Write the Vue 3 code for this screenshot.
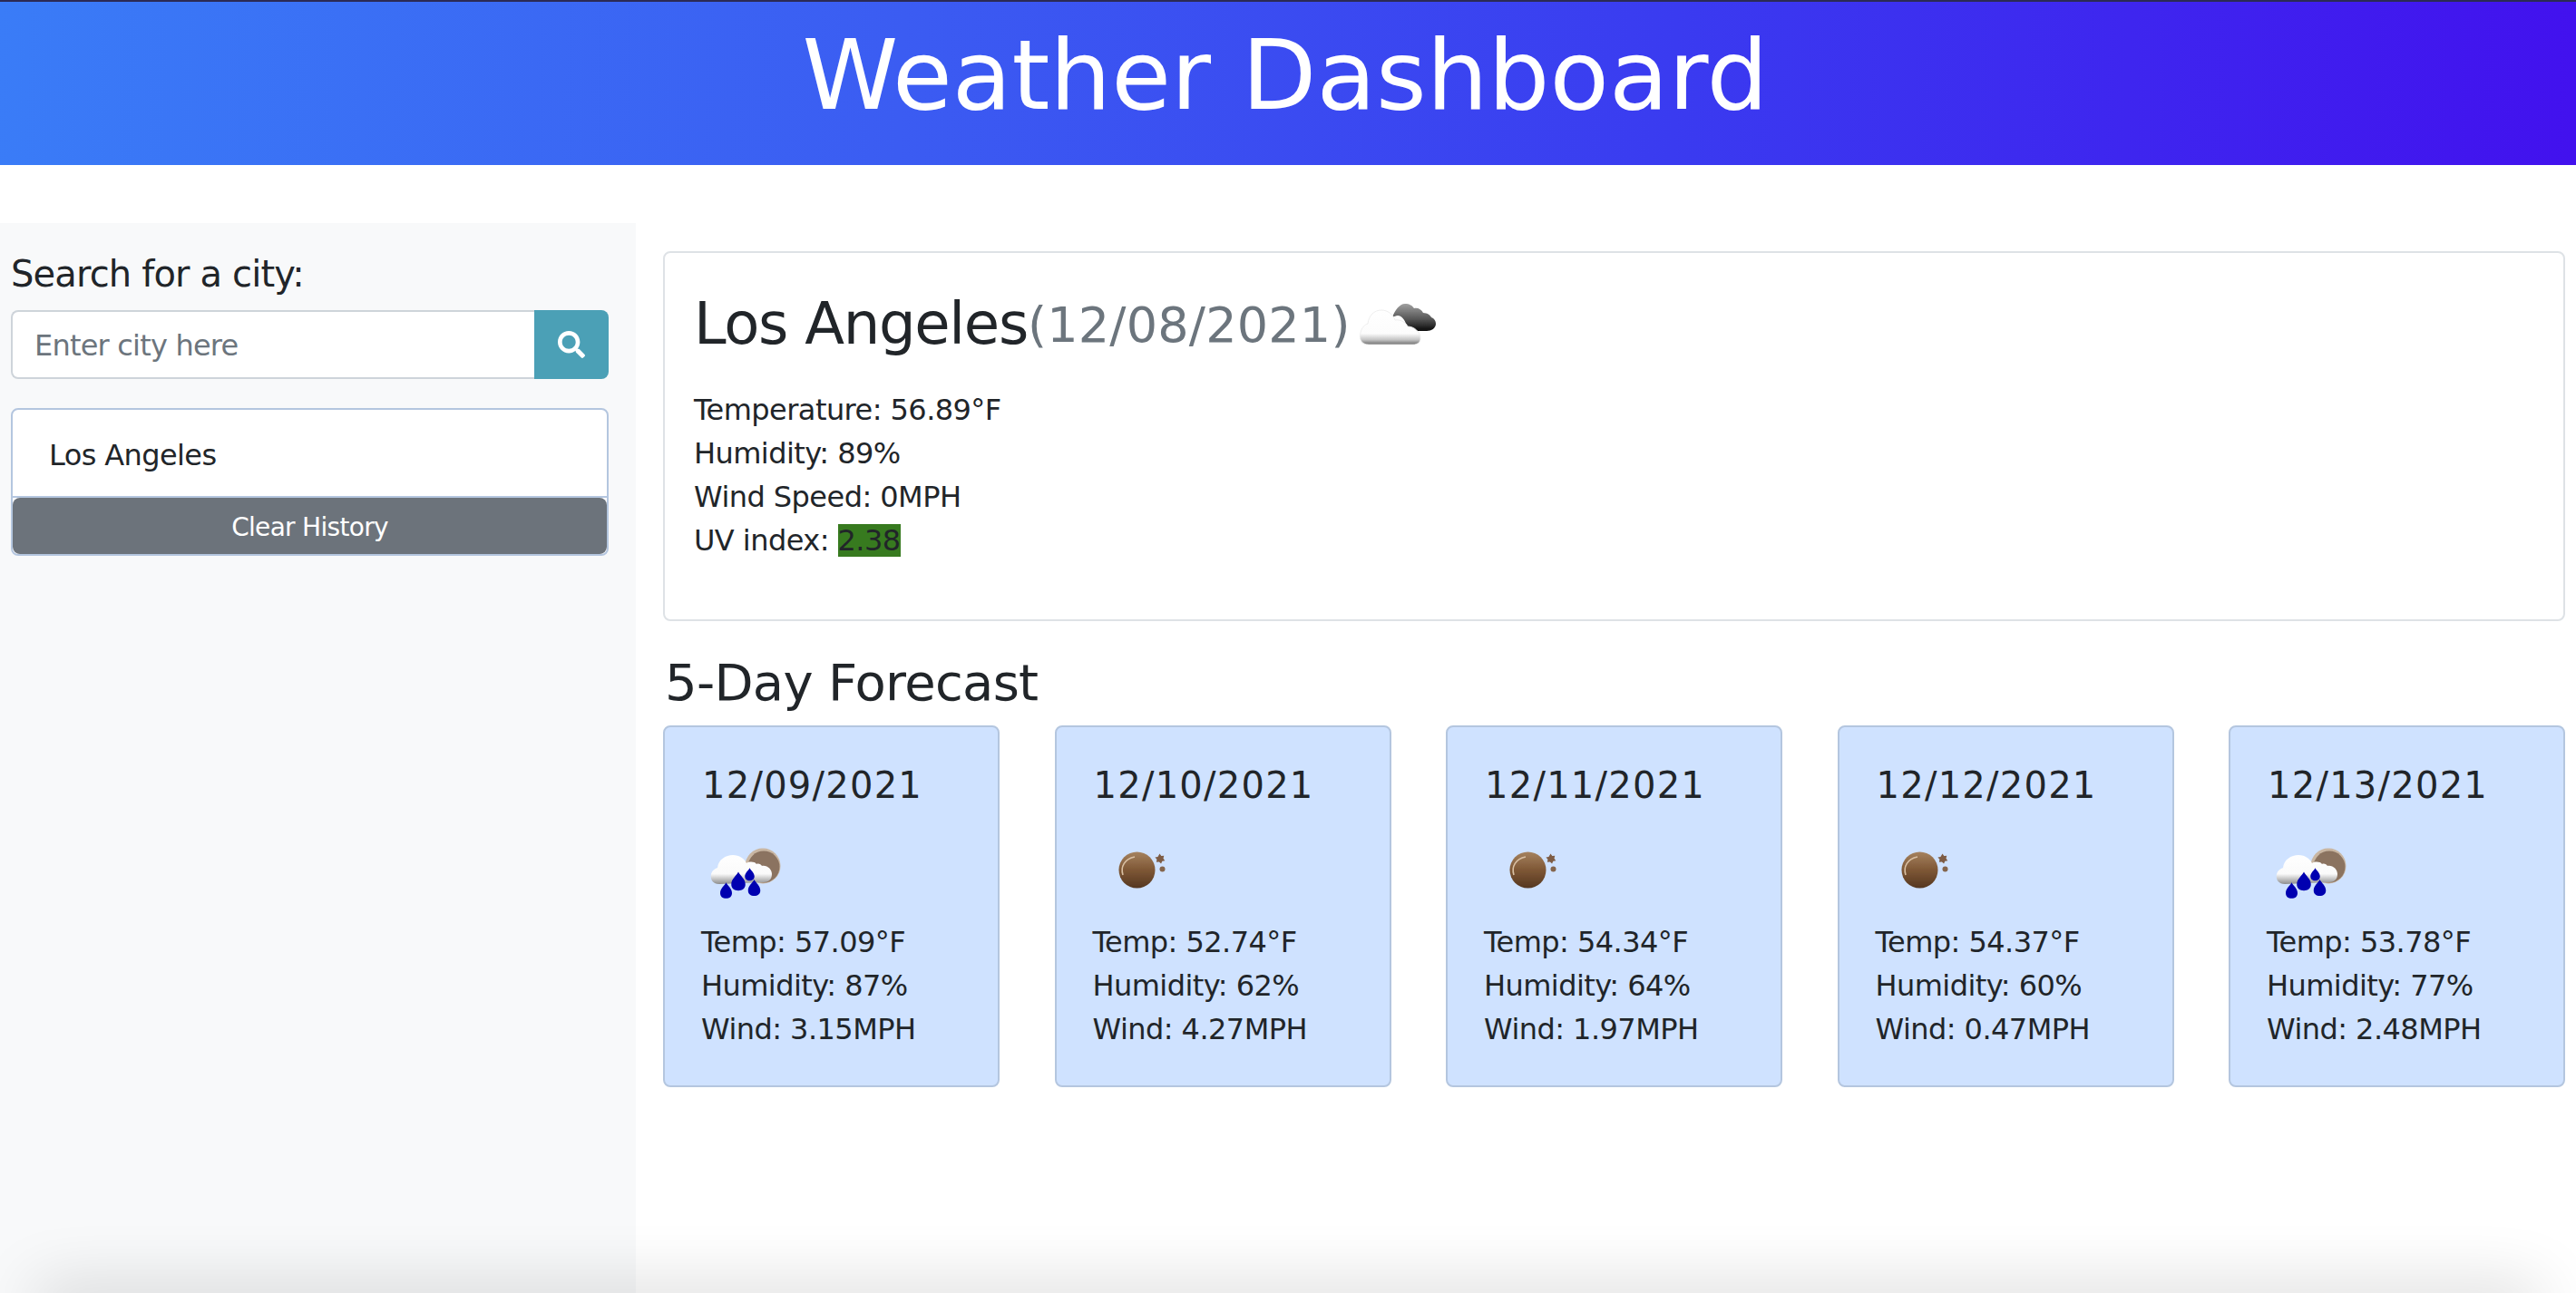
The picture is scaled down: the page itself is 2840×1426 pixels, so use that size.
<script setup>
const current = {
  city: 'Los Angeles',
  date: '(12/08/2021)',
  temp: '56.89',
  humidity: '89',
  wind: '0',
  uv: '2.38'
}

const forecast = [
  { date: '12/09/2021', icon: 'rain', temp: '57.09', humidity: '87', wind: '3.15' },
  { date: '12/10/2021', icon: 'moon', temp: '52.74', humidity: '62', wind: '4.27' },
  { date: '12/11/2021', icon: 'moon', temp: '54.34', humidity: '64', wind: '1.97' },
  { date: '12/12/2021', icon: 'moon', temp: '54.37', humidity: '60', wind: '0.47' },
  { date: '12/13/2021', icon: 'rain', temp: '53.78', humidity: '77', wind: '2.48' }
]

const drops = [
  { x: 31.5, y: 63, s: 1.3 },
  { x: 45, y: 53, s: 1.55 },
  { x: 57.5, y: 45, s: 1.05 },
  { x: 62.5, y: 60, s: 1.35 }
]
</script>

<template>
  <div class="page">
    <header class="top-bar">
      <h1>Weather Dashboard</h1>
    </header>

    <div class="content">
      <aside class="sidebar">
        <label class="search-label" for="city">Search for a city:</label>
        <div class="search-row">
          <input id="city" class="search-input" type="text" placeholder="Enter city here" />
          <button class="search-btn" aria-label="Search">
            <svg viewBox="0 0 512 512" width="30" height="30">
              <path fill="#fff" d="M505 442.7L405.3 343c-4.5-4.5-10.6-7-17-7H372c27.6-35.3 44-79.7 44-128C416 93.1 322.9 0 208 0S0 93.1 0 208s93.1 208 208 208c48.3 0 92.7-16.4 128-44v16.3c0 6.4 2.5 12.5 7 17l99.7 99.7c9.4 9.4 24.6 9.4 33.9 0l28.3-28.3c9.4-9.4 9.4-24.6.1-34zM208 336c-70.7 0-128-57.2-128-128 0-70.7 57.2-128 128-128 70.7 0 128 57.2 128 128 0 70.7-57.2 128-128 128z" />
            </svg>
          </button>
        </div>
        <div class="history">
          <div class="history-item">Los Angeles</div>
          <button class="clear-btn">Clear History</button>
        </div>
      </aside>

      <main class="main">
        <section class="today">
          <h2 class="city">
            {{ current.city }}<span class="today-date">{{ current.date }}</span>
            <svg class="today-icon" viewBox="0 0 100 60" width="100" height="60">
              <defs>
                <linearGradient id="whiteCloud" x1="0" y1="0" x2="0" y2="1">
                  <stop offset="0" stop-color="#fff" />
                  <stop offset="0.68" stop-color="#fcfcfc" />
                  <stop offset="0.86" stop-color="#c4c4c4" />
                  <stop offset="1" stop-color="#6f6f6f" />
                </linearGradient>
                <linearGradient id="darkCloud" x1="0" y1="0" x2="0" y2="1">
                  <stop offset="0" stop-color="#a0a0a0" />
                  <stop offset="0.55" stop-color="#585858" />
                  <stop offset="1" stop-color="#0a0a0a" />
                </linearGradient>
                <filter id="soft"><feGaussianBlur stdDeviation="0.6" /></filter>
              </defs>
              <g filter="url(#soft)">
                <path fill="url(#darkCloud)" d="M38 22C41 14 46 7 52 7c5 0 8 2 10 5 4-1 8 1 10 5 5 0 8 3 9 5 3 1 5 4 5 7 0 5-5 8-10 8H66c-6 0-11-3-13-8-1-4-5-9-9-9-2 0-4 1-6 2z" />
                <path fill="url(#whiteCloud)" stroke="#eaeaea" stroke-width="0.8" d="M12 52C4 52 1 46 3 39c1-6 5-9 8-10 1-9 7-15 15-15 7 0 13 5 15 11 5-1 12 2 14 7 7 0 14 6 14 13 0 5-4 7-8 7z" />
              </g>
            </svg>
          </h2>
          <p>Temperature: {{ current.temp }}°F</p>
          <p>Humidity: {{ current.humidity }}%</p>
          <p>Wind Speed: {{ current.wind }}MPH</p>
          <p>UV index: <span class="uv">{{ current.uv }}</span></p>
        </section>

        <h3 class="forecast-title">5-Day Forecast</h3>
        <div class="forecast">
          <article v-for="day in forecast" :key="day.date" class="day-card">
            <h5 class="day-date">{{ day.date }}</h5>
            <svg class="day-icon" viewBox="0 0 100 80" width="100" height="80">
              <defs>
                <linearGradient id="rainCloud" x1="0" y1="0" x2="0" y2="1">
                  <stop offset="0" stop-color="#fff" />
                  <stop offset="0.65" stop-color="#fafafa" />
                  <stop offset="1" stop-color="#8d8d8d" />
                </linearGradient>
                <linearGradient id="moonFill" x1="0" y1="0" x2="0" y2="1">
                  <stop offset="0" stop-color="#a5825f" />
                  <stop offset="0.5" stop-color="#7e5735" />
                  <stop offset="1" stop-color="#553721" />
                </linearGradient>
                <filter id="softer"><feGaussianBlur stdDeviation="0.5" /></filter>
              </defs>
              <g v-if="day.icon === 'rain'" filter="url(#softer)">
                <circle cx="72" cy="35" r="19.5" fill="#c9b6a2" />
                <circle cx="73" cy="36" r="17.5" fill="#8b7361" />
                <path fill="url(#rainCloud)" d="M24 55c-8 0-10-6-9-11 1-4 4-6 7-7 1-9 9-14 17-14 7 0 13 4 15 9 3-2 9-2 11 1 2-1 5 0 6 2 6-1 11 4 11 9 0 6-4 9-9 9z" />
                <g v-for="(d, i) in drops" :key="i" :transform="`translate(${d.x} ${d.y}) scale(${d.s})`">
                  <path fill="#0000b0" d="M0-7.500C1.500-4.500 5-2.500 5 1.500 5 4.500 2.800 6 0 6s-5-1.500-5-4.500C-5-2.500-1.500-4.500 0-7.500z" />
                </g>
              </g>
              <g v-else filter="url(#softer)" transform="translate(10 0)">
                <circle cx="42.500" cy="39.500" r="20" fill="url(#moonFill)" />
                <path fill="none" stroke="#d9c0a4" stroke-width="1.600" d="M27 45c-3-9 2-18 13-20" />
                <path fill="#7e5c45" d="M67.500 21.500l1.800 2.600 3-.4-.8 3 1.800 2.500-3 .6-1.200 2.800-2.200-2.200-3 .3.500-3-2-2.300 3-.5z" />
                <circle cx="70.500" cy="38.500" r="3" fill="#84654e" />
              </g>
            </svg>
            <p>Temp: {{ day.temp }}°F</p>
            <p>Humidity: {{ day.humidity }}%</p>
            <p>Wind: {{ day.wind }}MPH</p>
          </article>
        </div>
      </main>
    </div>

    <div class="bottom-shadow"></div>
  </div>
</template>

<style scoped>
.page {
  position: relative;
  height: 1426px;
  overflow: hidden;
  background: #fff;
  color: #212529;
  font-family: "DejaVu Sans", sans-serif;
  font-size: 32px;
  line-height: 48px;
  letter-spacing: -0.55px;
}

.top-bar {
  height: 182px;
  box-sizing: border-box;
  border-top: 2px solid #2b2a55;
  background: linear-gradient(92deg, #3a7cf7 0%, #3b5cf2 35%, #3a3bf0 65%, #4211ee 100%);
  text-align: center;
}
.top-bar h1 {
  margin: 0;
  padding-right: 6px;
  color: #fff;
  font-size: 107px;
  font-weight: 400;
  line-height: 162px;
  letter-spacing: 0;
}

.content {
  display: flex;
  margin-top: 64px;
  height: 1180px;
}

.sidebar {
  box-sizing: border-box;
  width: 701px;
  padding: 32px 30px 0 12px;
  background: #f8f9fa;
}
.search-label {
  display: block;
  font-size: 40px;
  line-height: 48px;
  letter-spacing: -0.85px;
  margin-bottom: 16px;
}
.search-row {
  display: flex;
  height: 76px;
}
.search-input {
  flex: 1;
  min-width: 0;
  box-sizing: border-box;
  padding: 2px 24px 0;
  border: 2px solid #ced4da;
  border-right: 0;
  border-radius: 8px 0 0 8px;
  background: #fff;
  font-family: inherit;
  font-size: 32px;
  letter-spacing: -0.8px;
  outline: none;
}
.search-input::placeholder { color: #6c757d; opacity: 1; }
.search-btn {
  display: flex;
  align-items: center;
  justify-content: center;
  width: 82px;
  border: 0;
  border-radius: 0 8px 8px 0;
  background: #4ba0b6;
  padding: 0;
}

.history {
  box-sizing: border-box;
  margin-top: 32px;
  height: 163px;
  border: 2px solid #b4c6df;
  border-radius: 8px;
  background: #fff;
  overflow: hidden;
}
.history-item {
  box-sizing: border-box;
  height: 97px;
  padding: 26px 0 0 40px;
  border-bottom: 2px solid #b4c6df;
  letter-spacing: -0.6px;
}
.clear-btn {
  display: block;
  width: 100%;
  height: 62px;
  padding: 3px 0 0;
  border: 0;
  border-radius: 8px;
  background: #6c737b;
  color: #fff;
  font-family: inherit;
  font-size: 28px;
  letter-spacing: -0.7px;
}

.main {
  flex: 1;
  box-sizing: border-box;
  padding: 31px 12px 0 30px;
}

.today {
  box-sizing: border-box;
  height: 408px;
  padding: 36px 32px 0;
  border: 2px solid #dee2e6;
  border-radius: 8px;
}
.today p { margin: 0; }
.city {
  display: flex;
  align-items: baseline;
  margin: 0 0 25px;
  font-size: 64px;
  font-weight: 400;
  line-height: 84px;
  letter-spacing: -1.3px;
}
.today-date {
  position: relative;
  top: -2px;
  color: #6c757d;
  font-size: 54px;
  letter-spacing: 0.2px;
}
.today-icon {
  align-self: flex-start;
  margin: 13px 0 0 8px;
}
.uv {
  display: inline-block;
  background: #377a1f;
  line-height: 36px;
}

.forecast-title {
  margin: 34px 0 14px 2px;
  font-size: 56px;
  font-weight: 400;
  line-height: 67px;
  letter-spacing: -0.7px;
}

.forecast {
  display: flex;
  justify-content: space-between;
}
.day-card {
  box-sizing: border-box;
  width: 371px;
  height: 399px;
  padding: 36px 0 0 40px;
  border: 2px solid #b4c6df;
  border-radius: 8px;
  background: #cfe2ff;
}
.day-card p { margin: 0; }
.day-date {
  margin: 0 0 0 1px;
  font-size: 40px;
  font-weight: 400;
  line-height: 56px;
  letter-spacing: 1.25px;
}
.day-icon {
  display: block;
  margin: 26px 0 15px -4px;
}

.bottom-shadow {
  position: absolute;
  left: 50px;
  right: 50px;
  top: 1430px;
  height: 20px;
  box-shadow: 0 0 70px 10px rgba(0, 0, 0, 0.18);
}
</style>

<style>
html, body { margin: 0; background: #fff; }
</style>
